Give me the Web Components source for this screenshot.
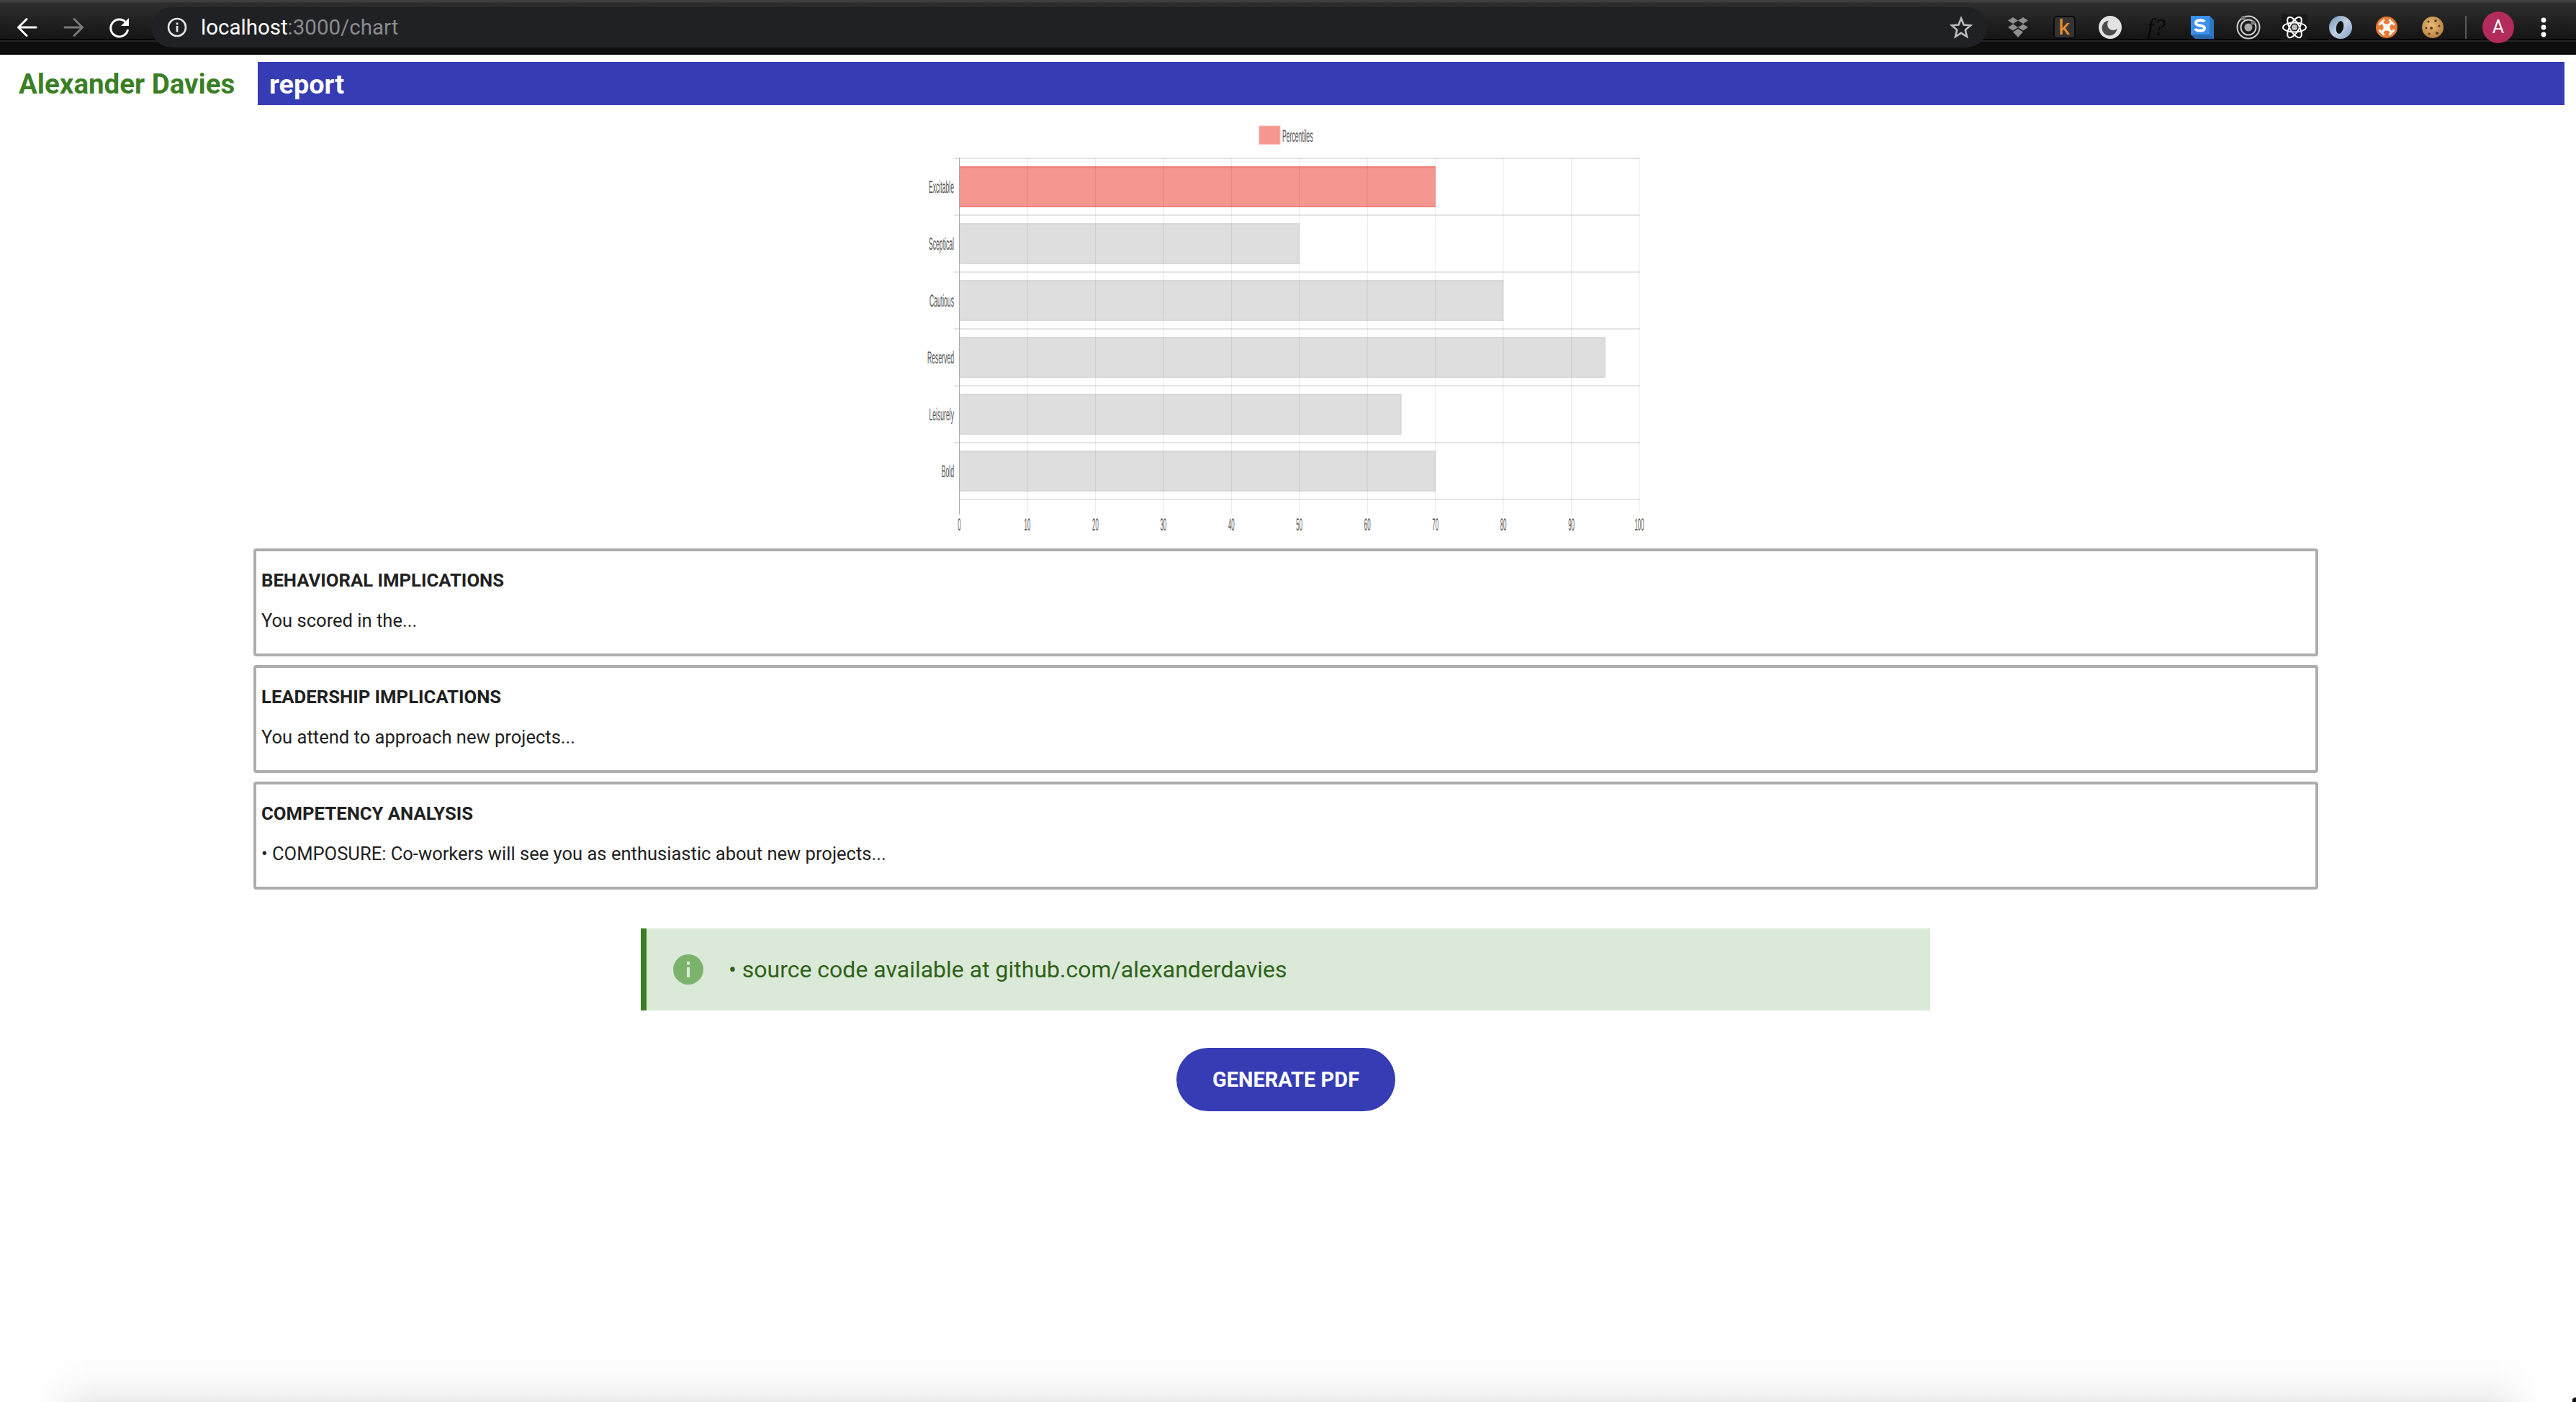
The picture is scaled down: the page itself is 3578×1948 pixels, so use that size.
<!DOCTYPE html>
<html lang="en">
<head>
<meta charset="utf-8">
<title>report</title>
<style>
html,body{margin:0;padding:0;background:#fff}
body{width:3578px;height:1948px;overflow:hidden;display:flex;flex-direction:column;font-family:Roboto,"Liberation Sans",sans-serif;color:#212121}
</style>
</head>
<body>
<browser-bar></browser-bar>
<app-header name="Alexander Davies" page="report"></app-header>
<percentile-chart></percentile-chart>
<report-body>
  <info-card heading="BEHAVIORAL IMPLICATIONS">You scored in the...</info-card>
  <info-card heading="LEADERSHIP IMPLICATIONS">You attend to approach new projects...</info-card>
  <info-card heading="COMPETENCY ANALYSIS">• COMPOSURE: Co-workers will see you as enthusiastic about new projects...</info-card>
  <info-alert>• source code available at github.com/alexanderdavies</info-alert>
  <pill-button>GENERATE PDF</pill-button>
</report-body>
<window-shade></window-shade>

<script>
function shadow(el, html){ el.attachShadow({mode:'open'}).innerHTML = html; }

class BrowserBar extends HTMLElement{
  connectedCallback(){ shadow(this, `
  <style>
    :host{display:flex;align-items:center;flex:none;height:76px;box-sizing:border-box;padding-left:6px;
      background:linear-gradient(#3e3e3e 0,#3e3e3e 3px,#2e2e2e 4px,#151515 54px,#050505 54px,#050505 56px,#262626 56px,#262626 58px,#0d0d0d 58px,#0d0d0d 74px,#000 74px,#000 76px)}
    .btn{flex:none;width:64px;height:56px;display:flex;align-items:center;justify-content:center}
    svg{display:block}
    .nav{margin-right:12px;display:flex}
    .omni{flex:none;width:2550px;height:56px;box-sizing:border-box;background:#202124;border-radius:28px;display:flex;align-items:center;padding-left:22px;position:relative}
    .url{font:400 29.5px/56px Roboto,sans-serif;color:#fff;margin-left:19px;white-space:nowrap}
    .url span{color:#8a8b8d}
    .star{margin-left:auto;margin-right:20px;display:flex}
    .exts{display:flex;margin-left:11px}
    .sep{flex:none;width:2px;height:32px;background:#5b5b5b;margin:0 22px 0 13px}
    .avatar{flex:none;width:44px;height:44px;border-radius:50%;background:#b22b5c;color:#fff;font:400 25px/44px Roboto,sans-serif;text-align:center}
    .dots{margin-left:37px;display:flex}
    .k{box-sizing:border-box;width:31px;height:32px;border-radius:5px;background:#333;border:2px solid #0b0b0b;color:#e58e2e;font:600 28px/27px "Open Sans",sans-serif;text-align:center}
    .f{font:italic 400 33px/36px "Liberation Serif",serif;color:#070707;white-space:nowrap}
  </style>
  <div class="nav">
    <div class="btn"><svg width="30" height="30" viewBox="0 0 30 30" fill="none" stroke="#fff" stroke-width="3" stroke-linecap="round" stroke-linejoin="round"><path d="M27 15H3M14 3.500 2.500 15 14 26.500"/></svg></div>
    <div class="btn"><svg width="30" height="30" viewBox="0 0 30 30" fill="none" stroke="#7a7a7a" stroke-width="3" stroke-linecap="round" stroke-linejoin="round"><path d="M3 15H27M16 3.500 27.500 15 16 26.500"/></svg></div>
    <div class="btn"><svg width="30" height="30" viewBox="0 0 30 30"><path d="M24.200 8.500A12 12 0 1 0 26.600 18" fill="none" stroke="#fff" stroke-width="3"/><path d="M28 2V13H17Z" fill="#fff"/></svg></div>
  </div>
  <div class="omni">
    <svg width="28" height="28" viewBox="0 0 28 28"><circle cx="14" cy="14" r="12" fill="none" stroke="#e6e6e6" stroke-width="2.600"/><rect x="12.600" y="12" width="2.800" height="8.500" fill="#e6e6e6"/><rect x="12.600" y="7.500" width="2.800" height="2.800" fill="#e6e6e6"/></svg>
    <div class="url">localhost<span>:3000/chart</span></div>
    <div class="star"><svg width="32" height="32" viewBox="0 0 32 32"><path d="M16 3.500 19.600 12.600 29 13.300 21.800 19.600 24 29 16 23.900 8 29 10.200 19.600 3 13.300 12.400 12.600Z" fill="none" stroke="#bdbdbd" stroke-width="2.600" stroke-linejoin="miter"/></svg></div>
  </div>
  <div class="exts">
    <div class="btn"><svg width="32" height="30" viewBox="0 0 32 30" fill="#8f8f8f"><path d="M9 1 16 5.500 9 10 2 5.500ZM23 1 30 5.500 23 10 16 5.500ZM9 10.500 16 15 9 19.500 2 15ZM23 10.500 30 15 23 19.500 16 15ZM16 17 23 21.500 16 29 9 21.500Z"/></svg></div>
    <div class="btn"><div class="k">k</div></div>
    <div class="btn"><svg width="34" height="34" viewBox="0 0 34 34"><circle cx="17" cy="17" r="16" fill="#e2e2e2"/><circle cx="16" cy="18" r="10.500" fill="#4b4b4b"/><circle cx="21" cy="13" r="8" fill="#e2e2e2"/></svg></div>
    <div class="btn"><div class="f">f?</div></div>
    <div class="btn"><svg width="34" height="34" viewBox="0 0 34 34"><path d="M27 1 33 7V33H7L1 27Z" fill="#2a68ad"/><path d="M27 1 33 7V33L27 27Z" fill="#2f76c0"/><rect x="1" y="1" width="26" height="26" fill="#3a90ea"/><path d="M20 9C18 6.500 8 6 8 11 8 16 20 13 20 18 20 23 9 22 7 19" fill="none" stroke="#fff" stroke-width="4"/></svg></div>
    <div class="btn"><svg width="36" height="36" viewBox="0 0 36 36" fill="none"><circle cx="18" cy="18" r="15.500" stroke="#d0d0d0" stroke-width="2"/><circle cx="18" cy="18" r="10.500" stroke="#d0d0d0" stroke-width="2"/><circle cx="18" cy="18" r="5.500" fill="#a9a9a9"/><circle cx="11" cy="5" r="3" fill="#7d7d7d"/><circle cx="24.500" cy="11.500" r="3" fill="#7d7d7d"/></svg></div>
    <div class="btn"><svg width="36" height="36" viewBox="0 0 36 36"><rect width="36" height="36" fill="#181818"/><g fill="none" stroke="#fff" stroke-width="2"><ellipse cx="18" cy="18" rx="16" ry="6.500"/><ellipse cx="18" cy="18" rx="16" ry="6.500" transform="rotate(60 18 18)"/><ellipse cx="18" cy="18" rx="16" ry="6.500" transform="rotate(120 18 18)"/></g><circle cx="18" cy="18" r="4" fill="#bbb"/></svg></div>
    <div class="btn"><svg width="34" height="34" viewBox="0 0 34 34"><defs><linearGradient id="rg" x1="0" y1="0" x2="1" y2="1"><stop offset="0" stop-color="#6f8fb8"/><stop offset=".5" stop-color="#c2d1e2"/><stop offset="1" stop-color="#7e9fc6"/></linearGradient></defs><circle cx="17" cy="17" r="16" fill="url(#rg)"/><ellipse cx="16" cy="17" rx="5" ry="9" transform="rotate(12 16 17)" fill="#141414"/></svg></div>
    <div class="btn"><svg width="32" height="32" viewBox="0 0 32 32"><circle cx="16" cy="16" r="15" fill="#e97b35"/><g stroke="#fff" stroke-width="3.200" stroke-linecap="round"><path d="M9 9 23 23M23 9 9 23"/><path d="M6 12 12 6M20 6 26 12M6 20 12 26M20 26 26 20" stroke-width="2.600"/></g><rect x="11.500" y="11.500" width="9" height="9" rx="2" fill="#fff"/></svg></div>
    <div class="btn"><svg width="32" height="32" viewBox="0 0 32 32"><defs><radialGradient id="ck" cx=".45" cy=".4" r=".65"><stop offset="0" stop-color="#e9bd78"/><stop offset="1" stop-color="#b57f3d"/></radialGradient></defs><circle cx="16" cy="16" r="15" fill="url(#ck)"/><g fill="#5c3a1a"><circle cx="10" cy="8" r="1.600"/><circle cx="20" cy="7" r="1.800"/><circle cx="25" cy="14" r="1.500"/><circle cx="14" cy="17" r="2"/><circle cx="7" cy="17" r="1.400"/><circle cx="22" cy="24" r="2"/><circle cx="11" cy="25" r="1.500"/></g></svg></div>
  </div>
  <div class="sep"></div>
  <div class="avatar">A</div>
  <div class="dots"><svg width="8" height="28" viewBox="0 0 8 28" fill="#fff"><circle cx="4" cy="4" r="3.400"/><circle cx="4" cy="14" r="3.400"/><circle cx="4" cy="24" r="3.400"/></svg></div>
  `);}
}
customElements.define('browser-bar',BrowserBar);

class AppHeader extends HTMLElement{
  connectedCallback(){ shadow(this, `
  <style>
    :host{display:flex;flex:none;height:60px;margin-top:10px;padding:0 16px 0 26px;align-items:stretch}
    .name{flex:none;width:332px;font:700 38.5px/62px Roboto,sans-serif;color:#3a7f24;white-space:nowrap}
    .page{flex:1;background:#363cb3;color:#fff;font:700 37.8px/62px Roboto,sans-serif;padding-left:16px}
  </style>
  <div class="name">${this.getAttribute('name')}</div>
  <div class="page">${this.getAttribute('page')}</div>`);}
}
customElements.define('app-header',AppHeader);

class PercentileChart extends HTMLElement{
  connectedCallback(){
    const X0=1332.5, U=9.445, rows=[['Excitable',70,1],['Sceptical',50,0],['Cautious',80,0],['Reserved',95,0],['Leisurely',65,0],['Bold',70,0]];
    const SX=.36;
    let bars='',hl='',vl='',lab='',tick='';
    rows.forEach((r,i)=>{
      const top=231+i*79, w=r[1]*U;
      bars+=`<rect x="${X0}" y="${top}" width="${w}" height="57" fill="${r[2]?'#f59790':'#dedede'}"/>`+
            `<rect x="${X0}" y="${top}" width="${w}" height="2.500" fill="${r[2]?'#f2827c':'#d9d9d9'}"/>`+
            `<rect x="${X0}" y="${top+55}" width="${w}" height="2" fill="${r[2]?'#f2827c':'#d9d9d9'}"/>`+
            `<rect x="${X0+w-1}" y="${top}" width="1" height="57" fill="${r[2]?'#f2827c':'#d4d4d4'}"/>`;
      lab+=`<text transform="translate(1325 ${top+37}) scale(${SX} 1)" text-anchor="end" class="t">${r[0]}</text>`;
    });
    for(let i=0;i<=6;i++){ hl+=`<rect x="${i==6?X0:1325}" y="${220+i*79-1}" width="${2277.5-(i==6?X0:1325)}" height="2" fill="#e4e4e4"/>`; }
    for(let i=0;i<=10;i++){
      const x=X0+i*10*U;
      vl+=`<rect x="${x-.5}" y="219" width="1" height="496" fill="${i==0?'#a9a9a9':'rgba(0,0,0,.09)'}"/>`;
      tick+=`<text transform="translate(${x} 737) scale(.33 1)" text-anchor="middle" class="t">${i*10}</text>`;
    }
    shadow(this, `
    <style>
      :host{display:flex;flex:none;justify-content:center;height:616px}
      svg{display:block;flex:none}
      .t{font:400 24px "Liberation Sans",Arial,sans-serif;fill:#555;text-rendering:geometricPrecision}
    </style>
    <svg width="1098" height="616" viewBox="1240 146 1098 616">
      <rect x="1749" y="175" width="29" height="25.500" fill="#f59790" stroke="#f9b9b5" stroke-width="1"/>
      <text transform="translate(1781 197) scale(.36 1)" class="t">Percentiles</text>
      ${hl}${bars}${vl}${lab}${tick}
    </svg>`);
  }
}
customElements.define('percentile-chart',PercentileChart);

class ReportBody extends HTMLElement{
  connectedCallback(){ shadow(this, `
  <style>
    :host{display:flex;flex-direction:column;align-items:center;flex:none;width:2868px;margin-left:352px}
    ::slotted(info-card){align-self:stretch}
  </style><slot></slot>`);}
}
customElements.define('report-body',ReportBody);

class InfoCard extends HTMLElement{
  connectedCallback(){ shadow(this, `
  <style>
    :host{display:block;box-sizing:border-box;height:150px;margin-bottom:12px;border:4px solid #adadad;border-radius:4px;padding:22px 7px 0;color:#212121}
    h3{margin:0;font:700 25.7px/36px Roboto,sans-serif}
    p{margin:20px 0 0;font:400 25.55px/36px Roboto,sans-serif}
  </style>
  <h3>${this.getAttribute('heading')}</h3><p><slot></slot></p>`);}
}
customElements.define('info-card',InfoCard);

class InfoAlert extends HTMLElement{
  connectedCallback(){ shadow(this, `
  <style>
    :host{display:flex;align-items:center;box-sizing:border-box;width:1791px;height:114px;margin-top:42px;margin-left:-1px;background:#dbe9d8;border-left:8px solid #3b7f24;padding-left:37px;color:#2e6218;font:400 32px/1 Roboto,sans-serif;white-space:nowrap}
    svg{flex:none;margin-right:35px}
  </style>
  <svg width="42" height="42" viewBox="0 0 42 42"><circle cx="21" cy="21" r="21" fill="#7bb26c"/><rect x="19" y="18" width="4" height="14" fill="#dbe9d8"/><rect x="19" y="10" width="4" height="4.500" fill="#dbe9d8"/></svg>
  <slot></slot>`);}
}
customElements.define('info-alert',InfoAlert);

class PillButton extends HTMLElement{
  connectedCallback(){ shadow(this, `
  <style>
    :host{display:block;flex:none;box-sizing:border-box;width:304px;height:88px;margin-top:52px;border-radius:44px;background:#363cb3;color:#fff;font:700 29px/88px Roboto,sans-serif;text-align:center}
  </style><slot></slot>`);}
}
customElements.define('pill-button',PillButton);

class WindowShade extends HTMLElement{
  connectedCallback(){ shadow(this, `
  <style>
    :host{display:block;flex:none;height:88px;margin-top:auto;position:relative;overflow:hidden}
    .g{height:100%;background:linear-gradient(#fff 0,#fdfdfd 35%,#fafafa 60%,#f5f5f5 80%,#ececec 100%);
      -webkit-mask-image:linear-gradient(90deg,transparent 50px,#000 130px,#000 3460px,transparent 3530px);mask-image:linear-gradient(90deg,transparent 50px,#000 130px,#000 3460px,transparent 3530px)}
    .c{position:absolute;right:0;bottom:0;width:5px;height:8px;background:radial-gradient(circle at 100% 100%,#111 60%,transparent 75%)}
  </style><div class="g"></div><div class="c"></div>`);}
}
customElements.define('window-shade',WindowShade);
</script>
</body>
</html>
